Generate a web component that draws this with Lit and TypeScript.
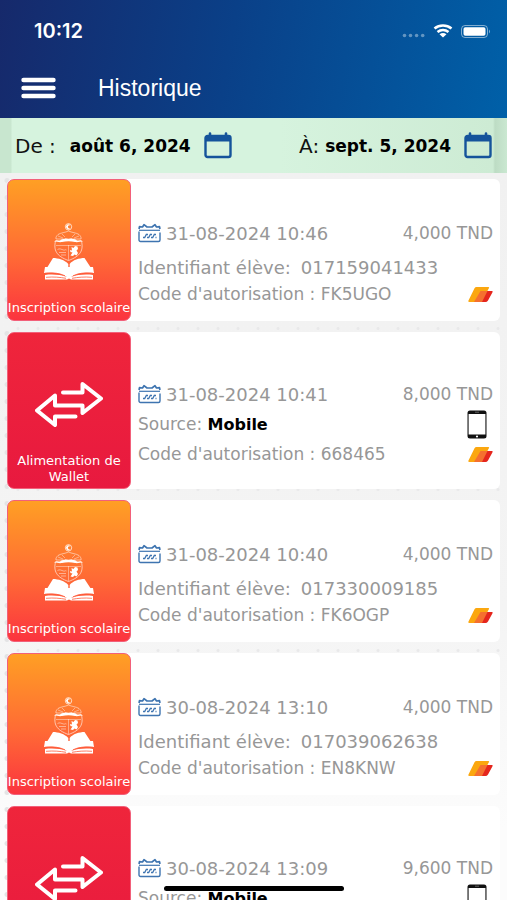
import { LitElement, html, css, svg, nothing } from "lit";
import { customElement, property } from "lit/decorators.js";

type Kind = "school" | "wallet";

interface Entry {
  kind: Kind;
  date: string;
  amount: string;
  student?: string;
  source?: string;
  code?: string;
}

const ENTRIES: Entry[] = [
  { kind: "school", date: "31-08-2024 10:46", amount: "4,000 TND", student: "017159041433", code: "FK5UGO" },
  { kind: "wallet", date: "31-08-2024 10:41", amount: "8,000 TND", source: "Mobile", code: "668465" },
  { kind: "school", date: "31-08-2024 10:40", amount: "4,000 TND", student: "017330009185", code: "FK6OGP" },
  { kind: "school", date: "30-08-2024 13:10", amount: "4,000 TND", student: "017039062638", code: "EN8KNW" },
  { kind: "wallet", date: "30-08-2024 13:09", amount: "9,600 TND", source: "Mobile" },
];

const LABELS: Record<Kind, string> = {
  school: "Inscription scolaire",
  wallet: "Alimentation de Wallet",
};

const schoolIcon = html`<svg width="50" height="57" viewBox="0 0 50 57" fill="none" aria-hidden="true">
  ${svg`
  <circle cx="24.500" cy="3.800" r="3.200" stroke="#fff" stroke-opacity=".7" stroke-width="1"/>
  <path d="M26.300 2.300a2.400 2.400 0 1 0 0 3.100 1.700 1.700 0 1 1 0-3.100z" fill="#fff"/>
  <path d="M24.500 8c-3 1.500-8 1.800-10.500 3.500-1.500 1.500-2.500 3-2 4.500h25c.5-1.500-.5-3-2-4.500C32.500 9.800 27.500 9.500 24.500 8z" stroke="#fff" stroke-opacity=".5" stroke-width="1"/>
  <path d="M11.500 18c-2 9 .5 15 13 19.500C37 33 39.500 27 37.500 18" stroke="#fff" stroke-opacity=".6" stroke-width="1"/>
  <path d="M12 22.500h25M24.500 22v15M14 13l5 2M35 13l-5 2M18 11l3 3M31 11l-3 3" stroke="#fff" stroke-opacity=".45" stroke-width=".9"/>
  <path d="M10 18.500c2-2 4-1 6-1 1-1.500 3-1.500 4.500-1.500 1.500-1 2.500 0 4 0s2.500-1 4 0c1.500 0 3.500 0 4.500 1.500 2 0 4-1 6 1-3 0-5 1-8 .5-4-1-9-1-13 0-3 .5-5-.5-8-.5z" fill="#fff"/>
  <path d="M13.500 26.500c2-1.500 4 0 6 .5s2-1 3 0M15 29.500h7M17 32h5" stroke="#fff" stroke-opacity=".5" stroke-width=".9"/>
  <path d="M27.500 24l2 1 1.500-2 2.500.5.500 2.500-1.500 1.500 1.500 2.500-1.500 2.500-2-1-1.500 1.500-2.500-.5 2-3-2-.5-.5-2 2 .5z" fill="#fff"/>
  <path d="M9 35c5 0 12 2 15.300 6v12.500C19 49 9 48 1 48z" fill="#fff"/>
  <path d="M40.500 35c-5 0-12 2-14.800 6v12.500C31 49 41 48 49 48z" fill="#fff"/>
  <path d="M1 44l-1 6c9-1 18 0 23 4C16 51.500 8 51 1 52v4.500h22l2-1 2 1h22V52c-7-1-15-.5-22 2 5-4 14-5 23-4l-1-6" fill="#fff"/>
  <path d="M1 50.300c8-1 15 0 20 2.500M49 50.300c-8-1-15 0-20 2.500M2 54.300c8-.7 14 0 20 1M48 54.300c-8-.7-14 0-20 1" stroke="#ff5a3b" stroke-width=".8"/>`}
</svg>`;

const arrowsIcon = html`<svg width="68" height="46" viewBox="0 0 68 46" fill="none" stroke="#fff" stroke-width="4" stroke-linecap="round" stroke-linejoin="round" aria-hidden="true">
  <path d="M28 11.500H47.500V3L66 17.500 47.500 32V24.500H20V14.500L2 29.500 20 44V35.500H40.500"/>
</svg>`;

const calendarIcon = html`<svg width="28" height="27" viewBox="0 0 28 27" aria-hidden="true">
  <path d="M1.500 4h25v5.500h-25z" fill="#15539b"/>
  <rect x="1.500" y="4" width="25" height="21" rx="2" fill="none" stroke="#15539b" stroke-width="2.400"/>
  <path d="M6 1.500v4M22 1.500v4" stroke="#15539b" stroke-width="2.600" stroke-linecap="round"/>
</svg>`;

const smallCalendarIcon = html`<svg width="23" height="20" viewBox="0 0 23 20" fill="none" stroke="#3e74b0" aria-hidden="true">
  <path d="M22 9.500V17a1.500 1.500 0 0 1-1.500 1.500h-18A1.500 1.500 0 0 1 1 17V8.500" stroke-width="1.400"/>
  <path d="M1 6L1.500 3.700l3 .3L6 1.700 9 4h5l3-2.300 1.500 2.300 3-.3L22 6" stroke-width="1.700" stroke-linejoin="round"/>
  <path d="M1 7.300h21" stroke-width="1.200"/>
  <path d="M8 11.500h2M12 11.500h2M16 11.500h2M5 14.500h2M9 14.500h2M13 14.500h2M17.500 14.500h1M8.500 11l-2 4M12.500 11l-2 4M16.500 11l-2 4" stroke-width="1.300"/>
</svg>`;

const phoneIcon = html`<svg width="20" height="29" viewBox="0 0 20 29" aria-hidden="true">
  <rect x=".5" y=".5" width="19" height="28" rx="2.500" fill="#111"/>
  <rect x="1.600" y="4" width="16.800" height="20.500" fill="#fff"/>
  <circle cx="10" cy="26.500" r="1.100" fill="#fff"/>
  <path d="M8 2.200h4" stroke="#777" stroke-width=".8"/>
</svg>`;

const walletIcon = html`<svg width="25" height="15" viewBox="0 0 25 15" aria-hidden="true">
  <path d="M8.500 0h12q1 0 .5 1l-7 13-1 1H1.500Q-.3 15 .5 13.500L6.500 1.300Q7.200 0 8.500 0z" fill="#fba70f"/>
  <path d="M14 4h10q1.200 0 .5 1.200l-4.500 8.300Q19 15 17.500 15H7z" fill="#e5261d"/>
  <path d="M12.500 4h7L14 15H6z" fill="#f5702f"/>
</svg>`;

@customElement("history-card")
class HistoryCard extends LitElement {
  @property({ attribute: false }) entry!: Entry;

  static styles = css`
    :host { display: block; }
    .card {
      display: grid;
      grid-template-columns: 124px 1fr;
      background: #fff;
      border-radius: 6px;
    }
    .tile {
      box-sizing: border-box;
      display: flex;
      flex-direction: column;
      border-radius: 7px;
      border: 1px solid #f2607a;
      color: #fff;
      text-align: center;
    }
    .school { background: linear-gradient(#ff9f24, #ff6a35 55%, #fb343f); }
    .wallet { background: linear-gradient(#ef253b, #e8193f); }
    .art {
      box-sizing: border-box;
      height: 120px;
      padding-top: 22px;
      display: grid;
      place-items: center;
    }
    .label {
      margin: 0 -4px;
      padding-bottom: 4px;
      font-size: 13px;
      line-height: 16px;
    }
    .wallet .label { padding: 0 12px 3px; }
    .info {
      padding: 37px 7px 0;
      color: #979797;
      font-size: 17px;
      white-space: nowrap;
    }
    .info.wide { padding-top: 47px; }
    .row {
      display: flex;
      align-items: center;
      justify-content: space-between;
      height: 34px;
    }
    .row.code { height: 20px; }
    .wide .row, .wide .row.code { height: 30px; }
    .when { display: flex; align-items: center; gap: 5px; font-size: 18px; }
    .student { font-size: 18px; }
    .value { margin-left: 10px; }
    .phone { display: flex; margin-right: 6px; }
    .brand { display: flex; }
    strong { color: #000; font-size: 16px; }
  `;

  render() {
    const e = this.entry;
    return html`<article class="card">
      <div class="tile ${e.kind}">
        <div class="art">${e.kind === "school" ? schoolIcon : arrowsIcon}</div>
        <div class="label">${LABELS[e.kind]}</div>
      </div>
      <div class="info ${e.source ? "wide" : ""}">
        <div class="row">
          <span class="when">${smallCalendarIcon}<time>${e.date}</time></span>
          <span>${e.amount}</span>
        </div>
        ${e.student
          ? html`<div class="row student"><span>Identifiant élève:<span class="value">${e.student}</span></span></div>`
          : nothing}
        ${e.source
          ? html`<div class="row"><span>Source: <strong>${e.source}</strong></span><span class="phone">${phoneIcon}</span></div>`
          : nothing}
        ${e.code
          ? html`<div class="row code"><span>Code d'autorisation : ${e.code}</span><span class="brand">${walletIcon}</span></div>`
          : nothing}
      </div>
    </article>`;
  }
}

@customElement("app-root")
class AppRoot extends LitElement {
  static styles = css`
    :host {
      display: flex;
      flex-direction: column;
      height: 100vh;
      overflow: hidden;
      font-family: "DejaVu Sans", "Noto Sans", sans-serif;
      background: #f3f3f3;
    }
    header {
      flex: none;
      background: linear-gradient(100deg, #16296b, #0a4088 45%, #0060a8);
      color: #fff;
    }
    .status {
      display: flex;
      align-items: center;
      justify-content: space-between;
      height: 62px;
      padding: 0 16px 0 34px;
      font: 600 20px Inter, sans-serif;
    }
    .bar {
      display: flex;
      align-items: center;
      gap: 42px;
      height: 56px;
      padding: 0 21px 4px;
      box-sizing: border-box;
    }
    button {
      border: 0;
      background: none;
      padding: 0;
      color: inherit;
      font: inherit;
      display: flex;
      align-items: center;
      cursor: pointer;
    }
    h1 {
      margin: 0;
      font: 400 23px "Liberation Sans", Arial, sans-serif;
    }
    .range {
      flex: none;
      display: flex;
      align-items: center;
      justify-content: space-between;
      height: 55px;
      padding: 0 15px;
      background: linear-gradient(90deg, #c8e6cf 11px, #d6f3de 12px, #d6f3de 55%, #cdebd4 calc(100% - 14px), #bddcc4 calc(100% - 12px), #cae8d1);
      color: #111;
      font-size: 20px;
    }
    .pick { display: flex; align-items: center; }
    .from { gap: 14px; }
    .to { gap: 6px; }
    .pick .date { gap: 13px; font-size: 17px; font-weight: 700; color: #000; }
    .list {
      flex: 1;
      min-height: 0;
      overflow-y: auto;
      scrollbar-width: none;
      display: flex;
      flex-direction: column;
      gap: 11px;
      padding: 6px 7px 0;
      background:
        radial-gradient(circle, #e4e4e5 2px, transparent 3px) 0 220px / 14px 17px repeat-y,
        radial-gradient(circle, #e9e9ea 1px, transparent 2px) 8px 6px / 20px 23px,
        linear-gradient(#f1f1f1, #f4f4f4 60%, #fcfcfc 90%);
    }
    history-card { flex: none; }
    .home {
      position: fixed;
      left: 50%;
      bottom: 9px;
      width: 180px;
      height: 5px;
      border-radius: 3px;
      background: #000;
      transform: translateX(-50%);
    }
  `;

  render() {
    return html`
      <header>
        <div class="status">
          <span>10:12</span>
          <svg width="90" height="16" viewBox="0 0 90 16" fill="none" aria-hidden="true">
            <g fill="#fff" fill-opacity=".38"><circle cx="3.500" cy="12.500" r="1.800"/><circle cx="9.500" cy="12.500" r="1.800"/><circle cx="15.600" cy="12.500" r="1.800"/><circle cx="21.700" cy="12.500" r="1.800"/></g>
            <path d="M33.500 5.500a13.500 13.500 0 0 1 17 0M36.500 9a9 9 0 0 1 11 0" stroke="#fff" stroke-width="2.600"/>
            <path d="M38.500 11.200a6 6 0 0 1 7 0L42 14.600z" fill="#fff"/>
            <rect x="60.500" y="2.500" width="26" height="12" rx="3.500" stroke="#fff" stroke-opacity=".5"/>
            <rect x="62.500" y="4.200" width="22" height="8.600" rx="1.800" fill="#fff"/>
            <path d="M88 6.500q2 2 0 4z" fill="#fff" fill-opacity=".5"/>
          </svg>
        </div>
        <div class="bar">
          <button aria-label="Menu">
            <svg width="35" height="22" viewBox="0 0 35 22" stroke="#fff" stroke-width="4.400" stroke-linecap="round" aria-hidden="true"><path d="M2.500 3h30M2.500 11h30M2.500 19h30"/></svg>
          </button>
          <h1>Historique</h1>
        </div>
      </header>
      <section class="range">
        <div class="pick from"><label for="from">De :</label><button id="from" class="date">août 6, 2024 ${calendarIcon}</button></div>
        <div class="pick to"><label for="to">À:</label><button id="to" class="date">sept. 5, 2024 ${calendarIcon}</button></div>
      </section>
      <main class="list">
        ${ENTRIES.map((e) => html`<history-card .entry=${e}></history-card>`)}
      </main>
      <div class="home"></div>
    `;
  }
}
